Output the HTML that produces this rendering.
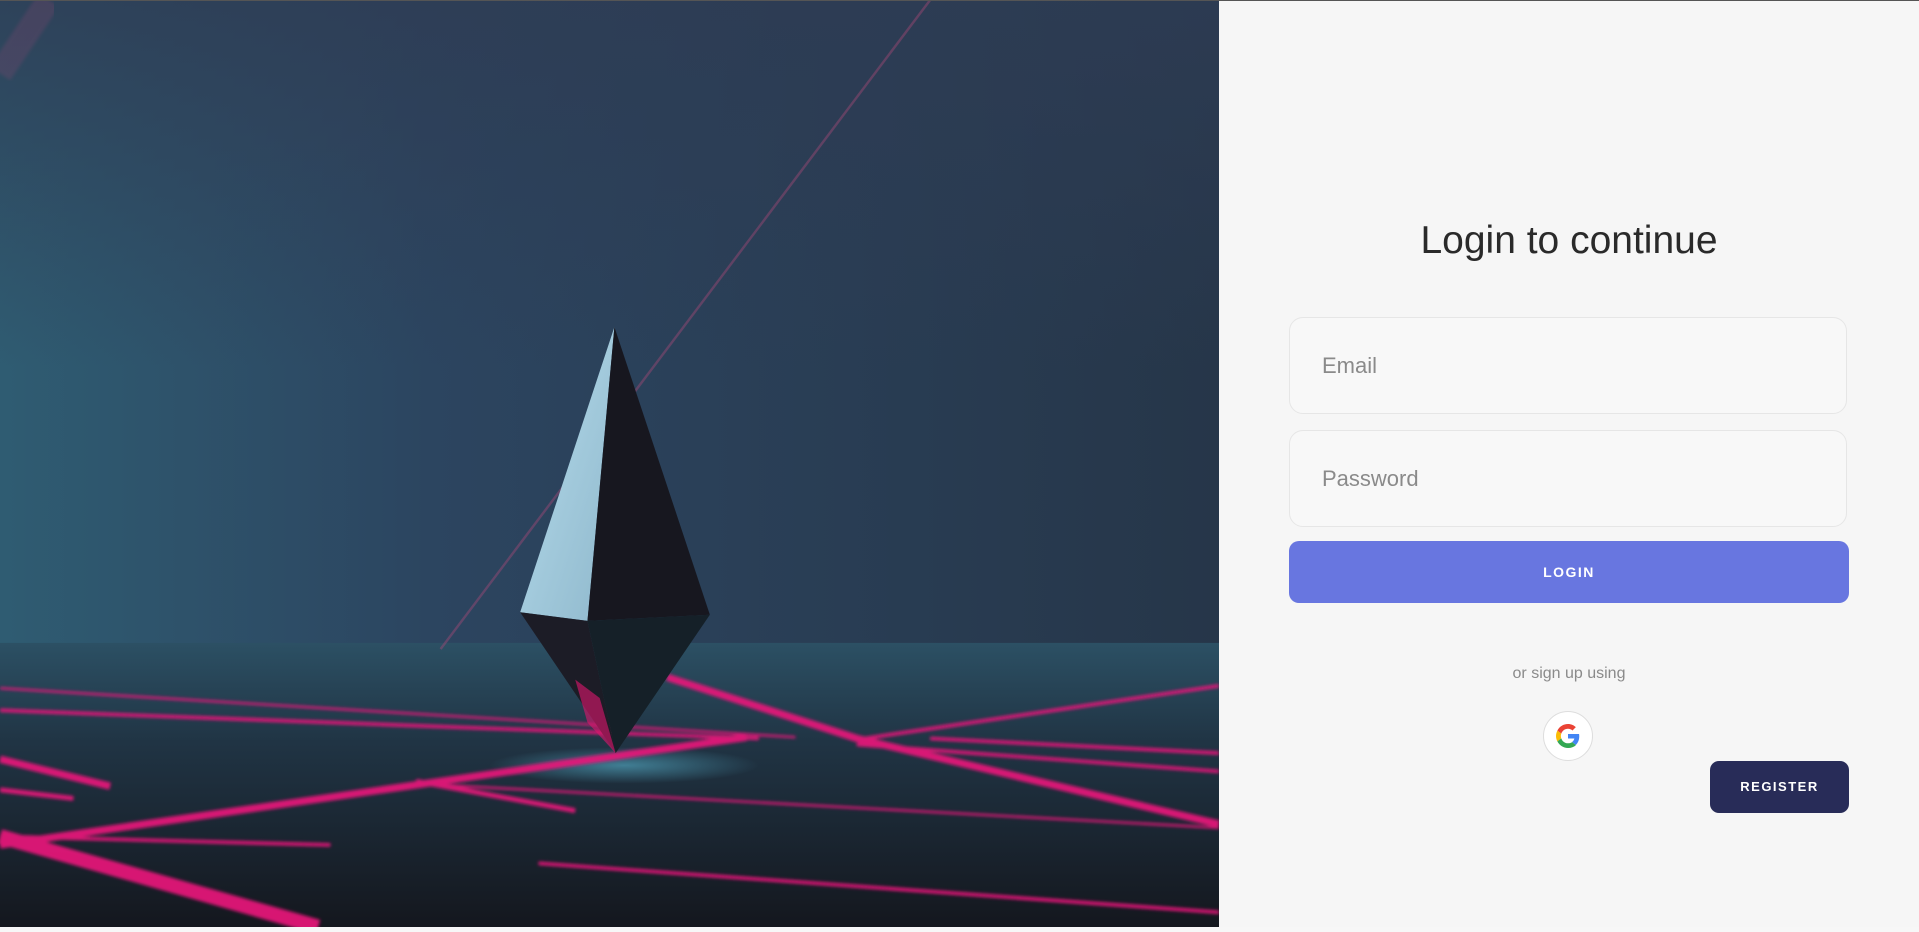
<!DOCTYPE html>
<html><head><meta charset="utf-8"><style>
html,body{margin:0;padding:0;width:1919px;height:927px;overflow:hidden;background:#f7f7f7;font-family:"Liberation Sans",sans-serif}
.left{position:absolute;left:0;top:0;width:1219px;height:927px}
.topline{position:absolute;left:0;top:0;width:1919px;height:1px;background:#555}
.right{position:absolute;left:1219px;top:1px;width:700px;height:926px;background:#f6f6f6}
h1{position:absolute;left:1219px;width:700px;top:219px;margin:0;text-align:center;font-weight:400;font-size:39px;color:#2a2a2a}
.inp{position:absolute;left:1289px;width:558px;height:97px;border:1px solid #e6e6e6;border-radius:14px;background:#f8f8f8;box-sizing:border-box;font-size:22px;color:#8a8a8a;padding-left:32px;line-height:95px}
.btn{position:absolute;color:#fff;font-weight:700;font-size:14px;letter-spacing:1.5px;text-align:center}
.login{left:1289px;top:541px;width:560px;height:62px;line-height:62px;background:#6876e0;border-radius:10px}
.reg{left:1710px;top:761px;width:139px;height:52px;line-height:52px;background:#282c58;border-radius:9px;font-size:13px}
.or{position:absolute;left:1219px;width:700px;text-align:center;top:665px;font-size:16px;color:#8a8a8a}
.g{position:absolute;left:1543px;top:711px;width:48px;height:48px;border-radius:50%;border:1px solid #ddd;background:#fff}
</style></head><body>
<div class="left">
<svg width="1219" height="927" viewBox="0 0 996 757" preserveAspectRatio="none">
<defs>
<linearGradient id="wall" x1="0" y1="0" x2="1" y2="0"><stop offset="0" stop-color="#2f5c72"/><stop offset=".35" stop-color="#2c4560"/><stop offset="1" stop-color="#263649"/></linearGradient>
<linearGradient id="wallv" x1="0" y1="0" x2="0" y2="1"><stop offset="0" stop-color="#2e3c54" stop-opacity=".8"/><stop offset="1" stop-color="#2e3c54" stop-opacity="0"/></linearGradient>
<linearGradient id="floor" x1="0" y1="0" x2="0" y2="1"><stop offset="0" stop-color="#2c5064"/><stop offset=".35" stop-color="#203444"/><stop offset="1" stop-color="#14171e"/></linearGradient>
<radialGradient id="glow" cx=".5" cy=".5" r=".5"><stop offset="0" stop-color="#4f9fb8" stop-opacity=".7"/><stop offset="1" stop-color="#4f9fb8" stop-opacity="0"/></radialGradient>
<linearGradient id="face" x1="0" y1="0" x2="1" y2="1"><stop offset="0" stop-color="#b6dcec"/><stop offset="1" stop-color="#8fb8cc"/></linearGradient>
<filter id="bl"><feGaussianBlur stdDeviation="1.2"/></filter>
</defs>
<rect width="996" height="530" fill="url(#wall)"/>
<rect width="996" height="300" fill="url(#wallv)"/>
<rect y="525" width="996" height="232" fill="url(#floor)"/>
<ellipse cx="510" cy="625" rx="110" ry="15" fill="url(#glow)"/>
<line x1="760" y1="0" x2="360" y2="530" stroke="#b04a7a" stroke-width="2" opacity=".4"/>
<line x1="40" y1="0" x2="0" y2="60" stroke="#b04a7a" stroke-width="20" opacity=".18" filter="url(#bl)"/>
<g stroke="#e8177a" stroke-linecap="butt" fill="none" filter="url(#bl)" opacity=".92">
<line x1="0" y1="562" x2="650" y2="602" stroke-width="2"/>
<line x1="0" y1="580" x2="620" y2="603" stroke-width="3"/>
<path d="M545 553 L700 603 L996 673" stroke-width="6"/>
<line x1="700" y1="604" x2="996" y2="560" stroke-width="3"/>
<line x1="0" y1="690" x2="610" y2="602" stroke-width="6"/>
<line x1="0" y1="683" x2="260" y2="757" stroke-width="12"/>
<line x1="0" y1="620" x2="90" y2="642" stroke-width="6"/>
<line x1="0" y1="645" x2="60" y2="652" stroke-width="4"/>
<line x1="340" y1="638" x2="470" y2="662" stroke-width="4"/>
<line x1="360" y1="641" x2="996" y2="676" stroke-width="2"/>
<line x1="440" y1="705" x2="996" y2="745" stroke-width="3"/>
<line x1="700" y1="608" x2="996" y2="630" stroke-width="3"/>
<line x1="0" y1="683" x2="270" y2="690" stroke-width="3"/>
<line x1="760" y1="603" x2="996" y2="615" stroke-width="3"/>
</g>
<polygon points="502,267 425,500 480,507" fill="url(#face)"/>
<polygon points="502,267 480,507 580,502" fill="#17171f"/>
<polygon points="425,500 480,507 503,615" fill="#1c1c26"/>
<polygon points="480,507 580,502 503,615" fill="#152028"/>
<polygon points="470,555 480,590 503,615 490,570" fill="#e0156e" opacity=".6"/>
</svg>
</div>
<div class="topline"></div>
<div class="right"></div>
<h1>Login to continue</h1>
<div class="inp" style="top:317px">Email</div>
<div class="inp" style="top:430px">Password</div>
<div class="btn login">LOGIN</div>
<div class="or">or sign up using</div>
<div class="g"><svg width="24" height="24" viewBox="0 0 48 48" style="position:absolute;left:12px;top:12px">
<path fill="#EA4335" d="M24 9.5c3.5 0 6.6 1.2 9 3.5l6.7-6.7C35.6 2.4 30.200 0 24 0 14.6 0 6.6 5.4 2.7 13.2l7.8 6.1C12.4 13.7 17.7 9.5 24 9.5z"/>
<path fill="#4285F4" d="M46.5 24.5c0-1.6-.1-3.1-.4-4.5H24v9h12.7c-.6 2.9-2.2 5.4-4.7 7.1l7.6 5.9c4.4-4.1 6.9-10.1 6.9-17.500z"/>
<path fill="#FBBC05" d="M10.5 28.7c-.5-1.5-.8-3-.8-4.7s.3-3.2.8-4.7l-7.8-6.1C1 16.6 0 20.2 0 24s1 7.4 2.7 10.8l7.8-6.1z"/>
<path fill="#34A853" d="M24 48c6.5 0 11.9-2.1 15.9-5.8l-7.6-5.9c-2.1 1.4-4.9 2.3-8.3 2.3-6.3 0-11.6-4.2-13.5-9.9l-7.8 6.1C6.6 42.6 14.6 48 24 48z"/>
</svg></div>
<div class="btn reg">REGISTER</div>
</body></html>
